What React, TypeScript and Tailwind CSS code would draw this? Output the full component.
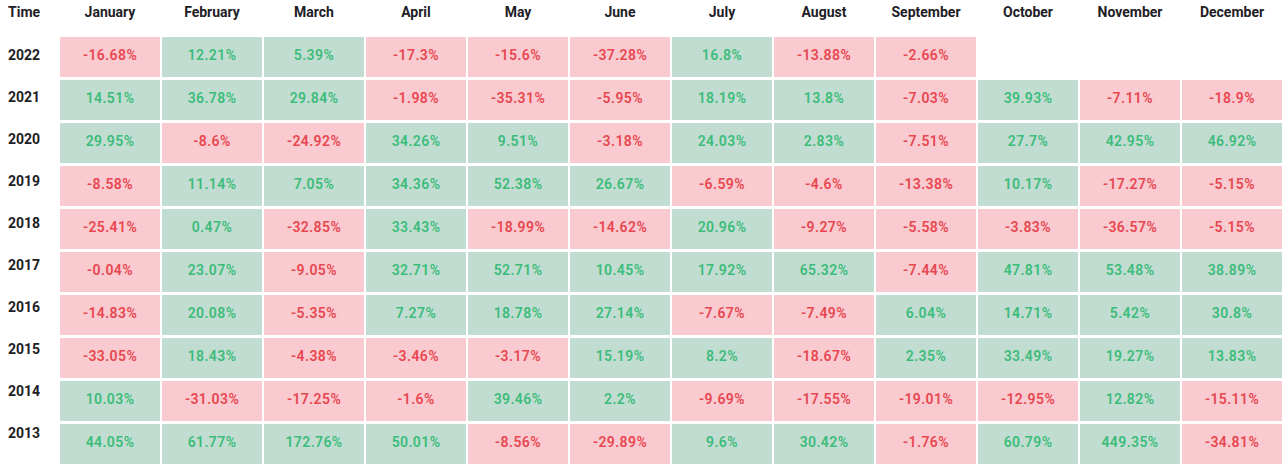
import React from "react";

const months = [
  "January",
  "February",
  "March",
  "April",
  "May",
  "June",
  "July",
  "August",
  "September",
  "October",
  "November",
  "December",
];

const rows: { year: string; values: (number | null)[] }[] = [
  { year: "2022", values: [-16.68, 12.21, 5.39, -17.3, -15.6, -37.28, 16.8, -13.88, -2.66, null, null, null] },
  { year: "2021", values: [14.51, 36.78, 29.84, -1.98, -35.31, -5.95, 18.19, 13.8, -7.03, 39.93, -7.11, -18.9] },
  { year: "2020", values: [29.95, -8.6, -24.92, 34.26, 9.51, -3.18, 24.03, 2.83, -7.51, 27.7, 42.95, 46.92] },
  { year: "2019", values: [-8.58, 11.14, 7.05, 34.36, 52.38, 26.67, -6.59, -4.6, -13.38, 10.17, -17.27, -5.15] },
  { year: "2018", values: [-25.41, 0.47, -32.85, 33.43, -18.99, -14.62, 20.96, -9.27, -5.58, -3.83, -36.57, -5.15] },
  { year: "2017", values: [-0.04, 23.07, -9.05, 32.71, 52.71, 10.45, 17.92, 65.32, -7.44, 47.81, 53.48, 38.89] },
  { year: "2016", values: [-14.83, 20.08, -5.35, 7.27, 18.78, 27.14, -7.67, -7.49, 6.04, 14.71, 5.42, 30.8] },
  { year: "2015", values: [-33.05, 18.43, -4.38, -3.46, -3.17, 15.19, 8.2, -18.67, 2.35, 33.49, 19.27, 13.83] },
  { year: "2014", values: [10.03, -31.03, -17.25, -1.6, 39.46, 2.2, -9.69, -17.55, -19.01, -12.95, 12.82, -15.11] },
  { year: "2013", values: [44.05, 61.77, 172.76, 50.01, -8.56, -29.89, 9.6, 30.42, -1.76, 60.79, 449.35, -34.81] },
];

const Cell = ({ value }: { value: number | null }) => {
  if (value === null) return <div className="h-[40px]" />;
  const up = value >= 0;
  return (
    <div
      className={
        up
          ? "h-[40px] flex items-center justify-center pb-[4px] bg-[#c1ddd1] text-[#3cbc7a] text-[14px] font-semibold tracking-[0.4px]"
          : "h-[40px] flex items-center justify-center pb-[4px] bg-[#f9cad0] text-[#e8474f] text-[14px] font-semibold tracking-[0.4px]"
      }
    >
      {value}%
    </div>
  );
};

export default function App() {
  return (
    <div className="w-[1287px] h-[471px] bg-white flex font-['Roboto','Liberation_Sans',sans-serif] text-[#1e2026]">
      <div className="w-[60px] shrink-0 pl-2 flex flex-col">
        <div className="h-[24px] flex items-center text-[14px] font-bold">Time</div>
        <div className="h-[10px]" />
        {rows.map((r) => (
          <div key={r.year} className="h-[42px] flex items-center text-[14px] font-bold">
            {r.year}
          </div>
        ))}
      </div>
      <div className="flex flex-col">
        <div className="grid grid-cols-[repeat(12,100px)] gap-x-[2px] h-[24px] mb-[13px]">
          {months.map((m) => (
            <div key={m} className="flex items-center justify-center text-[14px] font-bold">
              {m}
            </div>
          ))}
        </div>
        <div className="grid grid-cols-[repeat(12,100px)] gap-x-[2px] gap-y-[3px]">
          {rows.map((r) => (
            <React.Fragment key={r.year}>
              {r.values.map((v, i) => (
                <Cell key={i} value={v} />
              ))}
            </React.Fragment>
          ))}
        </div>
      </div>
    </div>
  );
}
